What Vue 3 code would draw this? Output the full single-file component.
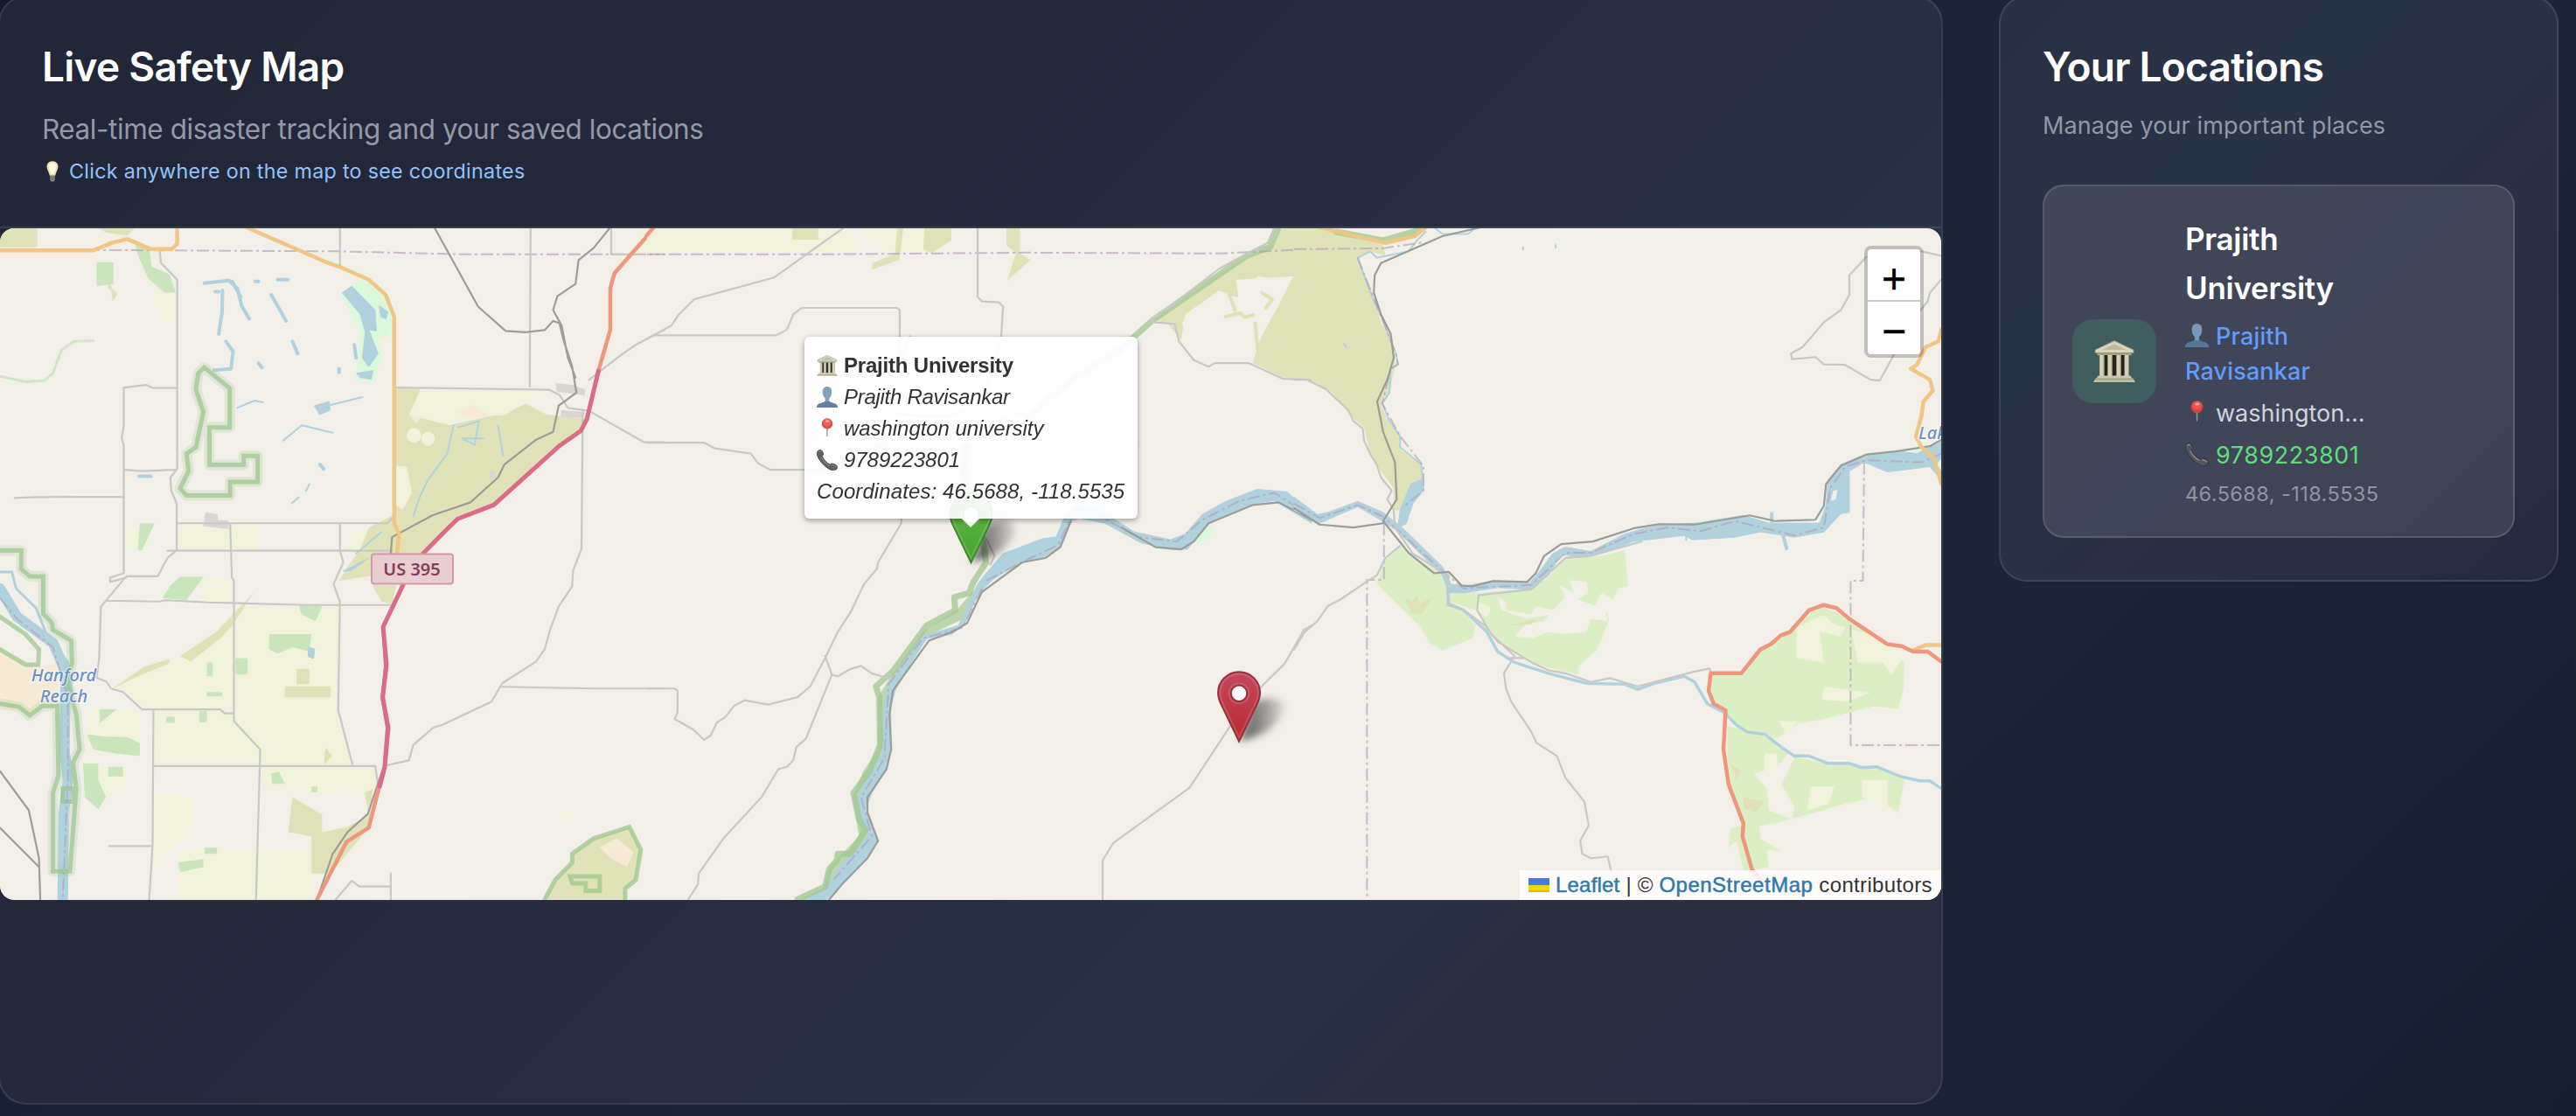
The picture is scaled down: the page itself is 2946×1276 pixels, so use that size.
<script setup>
import { h } from 'vue'

// Map geometry, split in three sheets; every sheet has its own local grid.
const sheets = [
  { x: 0, shapes: [
    ['olive', 'M0 0H88V46H0zM230 0H320L300 18 250 12zM258 120l6 20 14 12-12 18-4-24-8-8z'],
    ['farm', 'M360 140L415 150V216H378V178H360zM420 684H610V740H420zM300 684H330V740H300zM555 870H800L798 1110 832 1238H362V1108H550V1130L610 1195V1230H555zM265 1060L400 1000 500 940 550 905V1115L520 1108H335L300 1070zM362 1305H455L450 1400 400 1430 360 1490zM425 1430H610V1545H420V1440zM615 1240H885V1300H618zM610 1430H735V1545H610zM480 805H550V860H480zM1500 0H1568V62H1500zM1320 1340h28v28h-28zM205 1105L330 1110V1180L205 1190zM235 1240h60v60h-60zM845 690h60l-60 50h-40z'],
    ['green', 'M228 80H268V130L228 135zM318 40L352 50 358 90 400 108 415 150H388L350 118 328 70zM330 680H365L335 742H325zM425 803H480L440 857 383 852 405 820zM705 870H760L745 905 712 890zM635 935H735L730 975 690 965 655 980 635 970zM556 990H584V1028H556zM488 1000h14v32h-14zM488 1068h36v10h-36zM235 1108H275L235 1140zM205 1165L245 1170 300 1172 330 1185V1215L275 1210 220 1200zM196 1232H232V1270L250 1310 232 1338 200 1310zM255 1240h35v22h-35zM470 1112h18v26h-18zM640 1255l18-4 14 28h-30zM420 1460L480 1452V1470L425 1482zM482 1426h30v14h-30zM392 1125h20v14h-20zM735 1285h14v14h-14z'],
    ['olive', 'M262 1062L340 1010 400 992 400 1002 330 1030zM425 985L510 930 600 838 550 912 520 945 450 998zM934 370H990L1000 430 1060 455 1150 435 1190 430 1240 405 1290 430 1380 440 1370 465 1165 640 1080 670 1000 750H945L935 720 930 660zM870 690L930 660 945 750 880 800 800 812 820 780 850 740zM878 822H935L925 865 900 860zM690 1310L760 1350V1390L820 1378 870 1350 860 1300 880 1290 870 1380 780 1485H735V1400L680 1390zM672 1055H780V1080H672zM700 1015h30v35h-30zM768 1195l16 20-20 20z'],
    ['farm', 'M990 378H1290L1240 400 1190 432 1140 430 1050 452 1000 440 965 430zM960 478a17 17 0 1 0 34 0a17 17 0 1 0-34 0M994 486a16 16 0 1 0 32 0a16 16 0 1 0-32 0M935 548l25 2 12 60-22 40-15-10z'],
    ['wet', 'M805 155L850 120 895 135 925 185 922 245 890 260 902 295 880 355 840 350 850 240z'],
    ['sand', 'M1075 425L1115 408 1152 432 1110 440zM0 970L95 1010 135 1000V1105L100 1100 70 1120 0 1098zM965 432h28l-10 20z'],
    ['res', 'M1285 1545L1310 1500 1350 1460V1440L1400 1405 1485 1378 1512 1430 1500 1500 1475 1520V1545z'],
    ['sand', 'M1415 1425l40-20 40 30-15 35-40-20z'],
    ['town', 'M485 655l28 4 2 14h24v20l-60-6zM1310 358l40 4 30 10v14l-66-8zM1325 420l55 4-8 14-50-2zM1155 560l14 0v18h-14z'],
    ['water', 'M808 150L830 135 885 190 888 238 870 235 892 290 870 320 855 300 862 240 850 200zM842 335l38-6-4 20-26-4zM895 180l20 14-4 16-12-4zM742 410l35-10 2 20-24 10zM728 965l14 4-2 22-12-4zM810 790l60-30-40 28z'],
    ['creek', 'M482 128L540 122 560 140 570 180 588 210M548 124L568 160M525 145L524 195 516 245M533 262L550 285 545 325 505 328M640 155L675 215M655 120h25M602 124h8M690 262l12 28M836 270l4 30M800 325v8M610 312l8 10M755 545l8 10M328 572h28M508 148h8'],
    ['brook', 'M560 415L600 398 620 402M668 490L712 455 785 472M780 408L855 390M730 590l-8 16M705 620l-16 14M1070 455L1055 520 1010 580 990 620 975 665M1080 460l50-15-10 55-30-15 50 0M1175 455l12 70M900 700l-60 50'],
    ['creek2', 'M0 342L60 355 105 352 125 335 145 282 175 262 225 260'],
    ['river', 'M0 830L40 895 125 955 150 1010 155 1040 152 1200 160 1270 150 1350 148 1545'],
    ['river2', 'M0 792H28L38 830 85 875 110 935 160 1000 172 1080'],
    ['halo', 'M0 743H50V785L70 802H102V888L122 908 125 925 168 950 170 1000 160 1050 180 1120 188 1200 172 1230 180 1290 165 1480H125V1300L138 1260 135 1100 100 1100 70 1122 45 1102 0 1095M482 322L542 370V460H494V546H575V525H608V585H543V616H440L425 600 445 560 440 520 462 505 480 425 462 372 468 335z'],
    ['resline', 'M0 743H50V785L70 802H102V888L122 908 125 925 168 950 170 1000 160 1050 180 1120 188 1200 172 1230 180 1290 165 1480H125V1300L138 1260 135 1100 100 1100 70 1122 45 1102 0 1095M0 970L60 1005 90 1005 92 970 60 935 0 895M148 1290h26v30h-26zM482 322L542 370V460H494V546H575V525H608V585H543V616H440L425 600 445 560 440 520 462 505 480 425 462 372 468 335zM1285 1545L1310 1500 1350 1460V1440L1400 1405 1485 1378 1512 1430 1500 1500 1475 1520V1545M1345 1492H1415V1525H1382V1508H1350z'],
    ['bound', 'M0 52H230L800 55 1100 62H1568M0 852L40 900 125 965 160 1080V1270L148 1545'],
    ['road', 'M377 55L380 82 418 120V555L402 575 404 605 417 635V742L395 760 372 802H298L238 872 234 990 228 1035 252 1045 262 1060 290 1068 335 1108H520L530 1117H550M415 369H360L345 362 292 368V455L287 485 292 500V795L260 805V815L298 805M292 557L335 560 415 557M35 622L85 620 290 619M417 680H915L925 668M395 743H925M250 858L375 860 390 857 490 862 720 868H920M802 0V88M1252 0L1250 345V366M932 368L1295 373 1320 385 1340 415 1390 422 1520 494H1568M1375 425L1372 738 1352 790 1350 825 1318 872 1298 925 1285 970 1265 998 1185 1048 1160 1090 1045 1143 1022 1150 975 1190 965 1225 915 1236M1185 1056L1400 1060H1568M802 682V742L810 770 787 820 802 860 798 1110 832 1236M543 680L547 805 552 812 552 1135 614 1200 604 1545M362 1108L360 1420 352 1545M258 1422H355M362 1238H885L892 1280M1390 350L1470 290 1500 270 1568 235M1442 0V62H1500M792 1545L830 1502 848 1515H922M922 1485V1545'],
    ['rail', 'M1025 0L1128 182 1193 238 1240 241 1285 236 1305 215 1320 220 1330 260 1350 320 1360 380 1318 410 1305 470 1265 488 1190 545 1175 575 1110 632 1020 662 925 712 922 750M1440 0L1400 48 1365 75 1358 130 1315 158 1305 190 1325 225 1340 300 1358 345M948 825L902 920 908 1010 900 1080 912 1150 905 1240 868 1348 820 1390 785 1440 748 1545M0 1250L68 1340 92 1450 95 1545M0 1380L92 1470'],
    ['yellow', 'M0 53L220 53 265 35 300 27 355 50 405 50 418 38V0M582 0L765 78 800 90 870 120 910 155 930 205V680L942 705 937 750'],
    ['red', 'M1545 0L1450 105 1440 140V235L1412 330M895 1285L870 1380 818 1412 748 1545'],
    ['pink', 'M1412 330L1385 440 1370 468 1320 502 1165 638 1080 670 1040 708 998 750M952 820L904 918 912 1005 903 1080 916 1150 908 1240 896 1285'],
  ]},
  { x: 740, shapes: [
    ['farm', 'M0 0H470L500 56H0zM500 0H680L660 56H560z'],
    ['olive', 'M342 0H404V28H342zM590 0H605L595 75 530 97 532 82 585 60zM655 0H718V30L670 60 652 50zM848 0H880V60L905 75 850 122 870 60 848 40zM1500 0H1568V350L1500 345 1430 312 1450 200 1495 120 1440 112 1420 165 1380 158 1350 145 1270 200 1260 260 1230 222 1195 212 1400 75 1470 45z'],
    ['base', 'M1390 120L1525 112 1490 180 1450 250 1430 305 1300 300 1280 270 1262 220 1290 185 1360 168 1395 160zM1550 0h18v18z'],
    ['creek3', 'M1365 205l35-8 10 10 20-6M1435 220l6 60 10-20M1450 150l25 15-15 20M1372 150l15 40'],
    ['wet', 'M1290 715L1325 680 1342 692 1325 715 1300 730z'],
    ['resfill', 'M800 770L775 830 730 880 650 930 570 1040 545 1080V1200L510 1250 485 1310 500 1400 430 1470 415 1520 355 1545H420L500 1470 530 1400 500 1320 560 1230 565 1100 660 940 745 900z'],
    ['water', 'M800 795L840 750 935 715 965 712 985 665 1010 640 1060 645 1150 700 1235 718 1270 705 1310 660 1365 630 1440 602 1510 608 1568 660V680L1480 628 1430 635 1330 675 1275 740 1235 740 1165 725 1080 680 1020 668 1000 675 975 735 935 758 880 770 815 810 780 845 750 910 720 935 660 945 590 1050 575 1100 576 1200 560 1250 530 1300 515 1340 545 1410 520 1450 460 1510 425 1545H370L430 1510 455 1470 520 1400 490 1330 515 1270 555 1210 560 1100 570 1050 650 940 735 915 780 820z'],
    ['resline2', 'M1490 0L1470 45 1415 65 1195 212 1110 285 1010 345 940 400 900 440M755 500L745 560 790 700 800 770 770 815 760 840 725 850 727 880 660 915 580 1020 540 1055 548 1080 550 1190 525 1250 487 1300 500 1360 515 1385 480 1440 450 1440 448 1455 430 1475 420 1515 355 1545'],
    ['bound', 'M0 62L400 62 900 58 1350 60 1568 50M800 812L900 762 970 730 1000 668 1060 660 1160 712 1250 722 1310 672 1400 628 1480 610 1568 665M790 830L745 920 650 945 570 1050 560 1220 505 1310 530 1400 440 1500'],
    ['road', 'M18 248H305L330 235 345 200 365 185H590L596 190V300M0 256L58 225 75 200 112 165 300 115 465 0M780 0V160L790 170 830 172 840 182 835 260 790 400M0 495H135L160 508 245 520 262 542 290 557H372 420L600 480M600 670V680L545 770 542 785 512 820 480 885 450 930 420 990 385 1055 355 1080 285 1097 230 1087 205 1100 185 1125 165 1138 150 1168 135 1178 110 1155 65 1130 72 1115V1065L65 1060H0M420 985L436 1028 375 1175 352 1195 345 1225 330 1240 310 1245 270 1310 180 1405 122 1485 120 1510 97 1545M436 1028L450 1032 480 1015 505 1008 530 1025 575 1038M1075 1545V1455L1100 1415 1280 1288 1380 1140 1450 1055 1505 1002 1550 925 1568 915M1195 218L1245 222 1255 262 1290 305 1325 320 1340 312 1420 312 1500 348 1568 350M1480 0L1465 35 1415 60 1350 95 1290 140 1190 212M800 715L820 755 810 775M760 420L700 435 580 430M620 250L600 300 620 350M800 460L860 430 920 425'],
    ['rail', 'M1000 675L975 735 940 760 885 770 790 838 755 910 720 930 665 950 580 1065 572 1120 576 1200 565 1245 520 1310 520 1345 545 1410 520 1450 460 1510 430 1545M1120 690L1200 735 1260 740 1290 722 1325 680 1430 638 1490 632 1568 672'],
    ['red', 'M0 18L15 0'],
  ]},
  { x: 1480, shapes: [
    ['olive', 'M0 0H60L210 40 215 65 178 55 150 72 185 150 205 220 230 260 240 310 225 380 205 410 225 450 250 480 250 510 300 545 303 580 275 600 255 650H235L235 600 205 560 180 520 165 460 130 430 90 380 40 350 0 345z'],
    ['forest', 'M250 732L300 770 365 800 360 865 400 885 428 915 420 945 350 972 320 955 295 915 195 820 210 765zM365 830L440 840 550 830 600 805 640 755 730 755 780 742 788 825 765 830 740 880 742 905 715 970 670 1010V1028L570 1005 480 950 430 880 365 860zM985 1030H1055L1100 975 1170 930 1240 870 1300 895 1360 935 1400 960 1440 1000 1438 1060 1425 1108 1370 1100 1250 1130 1190 1140 1140 1175 1060 1155 1010 1105 985 1080zM1022 1145L1130 1175 1180 1215 1240 1230 1370 1240 1440 1270 1425 1345 1370 1310 1300 1325 1230 1345 1140 1368 1098 1375 1100 1405 1150 1435 1115 1430 1120 1470 1060 1480 1045 1410 1025 1425 1030 1380 1058 1375 1025 1280z'],
    ['base', 'M480 850L500 860 500 880 560 890 570 870 610 880 640 850 625 822 660 840 650 810 690 815 695 840 670 855 710 870 725 840 760 860 735 890 740 905 700 900 690 930 640 935 600 930 560 945 520 940 550 910 590 905 600 890 550 900 490 880zM1085 1255L1140 1240 1170 1205 1180 1220 1150 1280 1180 1330 1175 1360 1120 1340 1115 1290z'],
    ['farm', 'M1185 920L1250 890 1270 910 1300 920 1290 940 1240 930 1250 1000 1185 990zM1315 925L1400 945 1435 990 1410 1030 1390 1000 1330 1000zM1250 1055L1360 1070 1300 1090 1245 1085zM1110 1210h30v50h-30zM1220 1285h55l-15 40-50 15zM1340 1270H1400V1340L1340 1310zM435 860l30 15-10 20-20-10zM1145 1135h45l-30 30z'],
    ['sandy', 'M262 850L280 860 290 845 295 865 325 852 300 890 275 885zM1060 1310l50 10-20 25-30-10zM1030 1235l25 15-10 20zM510 915l60-15-10 12z'],
    ['wet', 'M1465 510h20v14h-20zM1170 680h50v6h-50zM635 735h22v8h-22z'],
    ['water', 'M0 620L55 660 80 655 150 630 210 655 255 690 350 780 370 820 400 825 470 812 555 818 580 790 610 750 640 735 700 745 780 705 850 685 950 680 1060 662 1120 680 1240 680 1255 640 1260 580 1290 545 1340 525 1430 515 1470 520 1527 490V530L1515 545 1527 560V580L1500 550 1400 562 1345 540 1310 560V655L1290 658 1250 700 1180 712 1100 700 1040 712 940 718 920 708 800 722 740 745 690 758 630 752 600 800 560 832 480 828 400 840 365 840 350 800 240 695 200 670 150 642 60 680 0 650zM245 690L250 650 275 590 300 580 305 605 280 635 265 680z'],
    ['base', 'M1272 605l10-2-4 22-12 4z'],
    ['brook', 'M150 70L180 150 210 215 240 290 245 315 228 325 225 380 208 405 225 445 250 480 250 505 300 545 305 600M150 70L180 55 195 70 270 55 290 30 310 10M925 700v18M950 680l5 12M330 0L350 15 410 15 430 0M118 268l6 8M540 45v6M617 40v6'],
    ['creek', 'M1127 658v18M1152 702l10 36'],
    ['creek4', 'M362 830L365 865 400 880 455 930 480 975 520 1000 600 1025 690 1048 780 1050 810 1062 850 1048 920 1032 945 1045 975 1095 1015 1115 1045 1145 1070 1160 1110 1165 1150 1195 1180 1215 1215 1215 1260 1232 1310 1232 1340 1242 1375 1240 1430 1262 1475 1272 1500 1272 1527 1290'],
    ['resline2', 'M100 10L210 30 300 5'],
    ['bound', 'M0 50L210 48 300 35M212 680V810H172V1545M1345 540L1342 812H1313V1190H1527M0 635L60 668 150 638 210 665 350 790 400 830 560 822 640 748 700 748 800 705 880 690 960 698 1040 675 1180 708 1250 690 1265 600 1300 550 1350 535 1480 540 1527 520M150 70L240 290 245 315 228 325 208 405 250 480 305 548 305 605 260 640'],
    ['road', 'M0 350L30 350 75 372 128 420 140 445 162 462 165 490 180 522 195 545 205 575 230 605 220 625 235 650 238 690 280 750 330 780 365 800 362 868 400 880 450 915 480 952 560 1000 600 1018 640 1025 700 1045 745 1036 810 1055 870 1040 940 1022 980 1014 983 1025M0 970L25 930 55 905 80 870 110 855 170 815 195 800 215 760 250 732M435 845L432 880 465 935 520 985 495 1025 500 1060 512 1090 560 1160 572 1185 620 1215 640 1265 685 1320 695 1375 675 1410 680 1440 700 1450 740 1446 748 1480M510 990H540M438 845L560 832 640 760 700 755 820 722M1350 68L1310 110V155L1290 190 1250 218 1200 275 1172 290 1175 303 1230 298 1250 315 1300 316 1360 350 1382 352 1425 275 1470 200 1495 170 1500 150 1527 120M1480 55L1527 65'],
    ['rail', 'M440 0L350 20 205 82 190 110 188 150 205 200 228 245 235 300 220 350 196 400 210 470 238 540 242 625 212 672 210 680 140 690 60 683 0 645M210 675L270 748 330 795 365 792 395 823 420 825 470 813 550 815 570 795 590 755 630 728 705 722 800 692 860 682 945 683 1075 662 1135 675 1230 672 1250 640 1255 590 1290 548 1350 522 1420 515 1500 503 1527 488'],
    ['yellow', 'M60 0L215 36 285 20 310 0M1527 235L1520 262 1490 275 1470 315 1455 325 1500 350 1507 375 1485 400 1480 435 1467 480 1480 505 1510 530 1527 590M1460 972L1490 960H1527'],
    ['red', 'M1100 1500L1080 1475 1058 1400 1060 1370 1025 1280 1013 1200 1018 1110 990 1095 978 1065 983 1025H1055L1100 970 1125 958 1148 938 1170 930 1215 880 1250 868 1280 875 1310 900 1400 958 1435 963 1460 975H1495L1527 998'],
  ]},
]

const glyphs = {
  temple: ['0 0 24 24', [
    ['path', { d: 'M12 .3 23 5.5v1.8H1V5.5z', fill: '#d8d4bb', stroke: '#8e8a72', 'stroke-width': .5 }],
    ['path', { d: 'M12 2.2 18.8 5.5H5.2z', fill: '#bdb89c' }],
    ['path', { d: 'M2.2 7.3h19.6v1.3H2.2z', fill: '#a5a188' }],
    ['path', { d: 'M4 8.5h16v12H4z', fill: '#24231e' }],
    ['path', { d: 'M3.6 8.5h2.6v12H3.6zM8.2 8.5h2.6v12H8.2zM13.200 8.500h2.600v12h-2.600zM17.800 8.500h2.600v12h-2.600z', fill: '#d5d1b7' }],
    ['path', { d: 'M5.8 8.5h.5v12h-.5zM10.4 8.5h.5v12h-.5zM15.400 8.500h.5v12h-.5zM20 8.500h.5v12H20z', fill: '#918d76' }],
    ['path', { d: 'M2.8 20.2h18.4l.9 1.5H1.9z', fill: '#cbc7ac' }],
    ['path', { d: 'M1.4 21.6h21.2L24 24H0z', fill: '#c5c0a2' }],
    ['path', { d: 'M1.2 22.4h21.6', stroke: '#8e8a72', 'stroke-width': .4 }],
  ]],
  person: ['0 0 24 24', [
    ['path', { d: 'M12 0C8.600 0 6.600 2.600 6.800 6.400c.1 2.800 1 5.300 2.900 6.900v3.100c-.5 1.600-4.300 2-6.700 3.100C1 20.400.2 22 0 24h24c-.2-2-1-3.600-3-4.500-2.400-1.100-6.200-1.500-6.700-3.100v-3.100c1.900-1.600 2.800-4.100 2.900-6.900C17.400 2.600 15.400 0 12 0z', fill: '#7799b9' }],
    ['path', { d: 'M0 24c.2-2 1-3.600 3-4.500 2.400-1.100 6.200-1.500 6.700-3.100 1.600 1 3 1 4.600 0 .5 1.600 4.300 2 6.700 3.100 2 .9 2.800 2.500 3 4.500z', fill: '#567798' }],
  ]],
  pin: ['0 0 24 24', [
    ['path', { d: 'M11.200 11h1.700l-.3 9.500-.6 1-.6-1z', fill: '#9a8f8d' }],
    ['circle', { cx: 12, cy: 6.4, r: 6.2, fill: '#d8403a' }],
    ['circle', { cx: 12, cy: 5.2, r: 4.4, fill: '#e55a50' }],
    ['ellipse', { cx: 12.3, cy: 3.6, rx: 2.1, ry: 1.4, fill: '#f7a59c' }],
  ]],
  phone: ['0 0 24 24', [
    ['path', { d: 'M1.300 1.800C2.600.4 4.400-.2 5.500 1c1.700 1.700 2.500 3.900 1.900 5L6.300 7.600c1.700 4 4.700 7.400 9 9.600l1.500-.9c1.400-.6 3.800.2 5.900 2 1.500 1.200 1.300 2.800-.2 4.200-2.300 2-6 1.500-9.700-1C7.400 18 2.900 12.500.9 7.300.1 5 .1 3.100 1.300 1.800z', fill: '#55565a', stroke: '#303134', 'stroke-width': .8 }],
    ['path', { d: 'M2.300 3.200C3 2 4.200 1.700 5 2.600M5.200 8.500c2 4.300 5 7.500 9.300 9.700M17.400 17.700c1.600-.2 3.300.7 4.600 2', fill: 'none', stroke: '#909296', 'stroke-width': 1 }],
  ]],
  bulb: ['0 0 24 24', [
    ['path', { d: 'M12 .3C8 .3 5.400 3.100 5.600 7c.1 3.200 2.500 5.600 3.200 9.800h6.400c.7-4.200 3.100-6.600 3.200-9.800C18.600 3.100 16 .3 12 .3z', fill: '#f8df9a' }],
    ['path', { d: 'M12 2C9.600 2 7.700 4.100 7.900 7.200c.1 2.600 1.700 4.400 2.200 7.800h3.800c.5-3.400 2.100-5.200 2.200-7.800C16.300 4.100 14.400 2 12 2z', fill: '#fffbe6' }],
    ['path', { d: 'M9.200 16.800h5.600v4.600L13.500 23.600h-3l-1.300-2.200z', fill: '#8b8b86' }],
    ['path', { d: 'M9.200 18.500h5.600M9.200 20.600h5.600', stroke: '#4c4d50', 'stroke-width': .6 }],
  ]],
}
const Glyph = (p) => h('svg', { viewBox: glyphs[p.name][0], 'aria-hidden': 'true' },
  glyphs[p.name][1].map(([tag, attrs]) => h(tag, attrs)))
Glyph.props = ['name']

const pins = [
  { id: 'green', x: 1110.5, y: 643.5, top: '#5cb946', bottom: '#4aa22f', edge: '#3c8a2a' },
  { id: 'red', x: 1417, y: 848, top: '#c2485c', bottom: '#bb2a2e', edge: '#96303f' },
]

const details = [
  { icon: 'person', text: 'Prajith Ravisankar' },
  { icon: 'pin', text: 'washington university' },
  { icon: 'phone', text: '9789223801' },
]
</script>

<template>
  <div class="page">
    <section class="panel map-panel">
      <header class="map-head">
        <h2 class="title t-map">Live Safety Map</h2>
        <p class="lead">Real-time disaster tracking and your saved locations</p>
        <p class="tip"><Glyph name="bulb" class="bulb" /><span>Click anywhere on the map to see coordinates</span></p>
      </header>

      <div class="map">
        <svg class="tiles" viewBox="0 261 2220 768" preserveAspectRatio="none">
          <g v-for="s in sheets" :key="s.x" :transform="`translate(${s.x} 260) scale(.4847 .4974)`">
            <path v-for="(p, i) in s.shapes" :key="i" :class="['m', p[0]]" :d="p[1]" />
          </g>
          <g class="water-name">
            <text x="73" y="779" text-anchor="middle">Hanford</text>
            <text x="73" y="803" text-anchor="middle">Reach</text>
            <text x="2194" y="501.500">Lake</text>
          </g>
          <rect x="425" y="633.500" width="93" height="34" rx="3" class="shield" />
          <text x="471" y="657.500" text-anchor="middle" class="shield-text">US 395</text>

          <defs>
            <linearGradient v-for="p in pins" :id="'fill-' + p.id" :key="p.id" x1="0" y1="0" x2="0" y2="1">
              <stop offset="0" :stop-color="p.top" />
              <stop offset="1" :stop-color="p.bottom" />
            </linearGradient>
            <linearGradient id="shade" x1="0" y1="0" x2="1" y2="0">
              <stop offset="0" stop-opacity=".6" />
              <stop offset=".4" stop-opacity=".45" />
              <stop offset="1" stop-opacity=".1" />
            </linearGradient>
            <filter id="soft" x="-50%" y="-50%" width="200%" height="200%"><feGaussianBlur stdDeviation="2.200" /></filter>
          </defs>
          <g v-for="p in pins" :key="p.id" :transform="`translate(${p.x - 25} ${p.y - 81}) scale(2)`">
            <path d="M13 40L20 19c6-4 14-4 17-1 3 4-2 12-8 16-5 3-10 5-16 6z" fill="url(#shade)" filter="url(#soft)" />
            <path d="M12.500.6C5.900.6.5 5.900.5 12.500c0 2.800.9 5 2 7.200l10 20.700 10-20.700c1.100-2.200 2-4.400 2-7.200C24.500 5.900 19.100.6 12.500.6z" :fill="`url(#fill-${p.id})`" :stroke="p.edge" />
            <path d="M12.500 1.700C6.500 1.700 1.600 6.500 1.600 12.500c0 2.600.9 4.700 1.900 6.700l9 18.800 9-18.800c1-2 1.900-4.100 1.900-6.700 0-6-4.900-10.800-10.900-10.800z" fill="none" stroke="#fff" stroke-opacity=".14" />
            <circle cx="12.500" cy="12.900" r="5.700" fill="none" stroke="#fff" stroke-opacity=".14" />
            <circle cx="12.500" cy="12.900" r="4.600" fill="#fff" :stroke="p.edge" />
          </g>
        </svg>

        <div class="tooltip">
          <div class="row name"><Glyph name="temple" class="em" />Prajith University</div>
          <div v-for="d in details" :key="d.icon" :class="['row', d.icon]"><Glyph :name="d.icon" class="em" />{{ d.text }}</div>
          <div class="row">Coordinates: 46.5688, -118.5535</div>
        </div>
        <div class="pin-dot"></div>

        <div class="zoom">
          <a class="zin">+</a>
          <a>−</a>
        </div>

        <div class="credit">
          <svg class="flag" viewBox="0 0 12 8"><path fill="#4c7be1" d="M0 0h12v4H0z" /><path fill="#ffd500" d="M0 4h12v3H0z" /><path fill="#e0bc00" d="M0 7h12v1H0z" /></svg>
          <span class="link">Leaflet</span><span class="bar">|</span><span>©</span><span class="link osm">OpenStreetMap</span><span class="contrib">contributors</span>
        </div>
      </div>
    </section>

    <aside class="panel side">
      <h2 class="title t-side">Your Locations</h2>
      <p class="side-lead">Manage your important places</p>
      <article class="card">
        <div class="badge"><Glyph name="temple" class="temple" /></div>
        <div class="info">
          <h3>Prajith<br>University</h3>
          <p class="owner"><Glyph name="person" class="ico" />Prajith<br>Ravisankar</p>
          <p class="place"><Glyph name="pin" class="ico" />washington...</p>
          <p class="tel"><Glyph name="phone" class="ico" />9789223801</p>
          <p class="coord">46.5688, -118.5535</p>
        </div>
      </article>
    </aside>
  </div>
</template>

<style>
body { background: #161d30; }
</style>

<style scoped>
.page {
  box-sizing: border-box;
  width: 2946px;
  height: 1276px;
  overflow: hidden;
  display: flex;
  align-items: flex-start;
  gap: 64px;
  background: linear-gradient(135deg, #14192d 0%, #1a2338 40%, #1e273a 66%, #1b2336 80%, #161d2f 100%);
  font-family: Inter, "Liberation Sans", sans-serif;
  color: #fff;
}
.page * { box-sizing: border-box; }
h2, h3, p { margin: 0; font-weight: 400; }
.panel {
  flex: none;
  border: 2px solid rgba(255, 255, 255, .1);
  border-radius: 32px;
  margin-top: -5px;
}
.map-panel {
  width: 2224px;
  height: 1268px;
  margin-left: -2px;
  background: linear-gradient(135deg, #212638 0%, #23293b 30%, #282d41 58%, #293245 72%, #2b2f42 82%, #292c40 100%);
}
.map-head {
  height: 264px;
  padding: 51px 48px 0;
  border-bottom: 2px solid rgba(255, 255, 255, .1);
}
.title { font-size: 46px; line-height: 56px; font-weight: 600; letter-spacing: -.75px; white-space: nowrap; }
.lead { font-size: 31.500px; line-height: 48px; margin-top: 20px; letter-spacing: -.44px; color: #9499a5; white-space: nowrap; }
.tip { display: flex; align-items: center; font-size: 23.300px; line-height: 32px; margin-top: 8px; letter-spacing: .28px; color: #93c1fb; white-space: nowrap; }
.bulb { width: 24px; height: 24px; margin-right: 7px; }

.map {
  position: relative;
  width: 2220px;
  height: 768px;
  border-radius: 16px;
  overflow: hidden;
  background: #f2efe9;
  font-family: "Liberation Sans", Arial, sans-serif;
}
.tiles { display: block; width: 2220px; height: 768px; }
.m { fill: none; vector-effect: non-scaling-stroke; stroke-linejoin: round; stroke-linecap: round; }
.base { fill: #f2efe9; }
.olive { fill: #dfe2b6; }
.farm { fill: #f1f2dc; }
.green { fill: #c9e5bb; }
.forest { fill: #dbeec4; }
.wet { fill: #dbf8db; }
.sand { fill: #f6ead4; }
.sandy { fill: #dfe2b4; }
.town { fill: #d8d5d2; }
.water { fill: #b0d2de; stroke: #b0d2de; stroke-width: 1; }
.res { fill: #dfe2b6; }
.resfill { fill: #bcd6ae; }
.creek { stroke: #b0d2de; stroke-width: 4; }
.brook { stroke: #b0d2de; stroke-width: 2; }
.creek2 { stroke: #cfe5c4; stroke-width: 3; stroke-dasharray: 12 3; }
.creek3 { stroke: #dfe2b6; stroke-width: 4; }
.creek4 { stroke: #b0d2de; stroke-width: 3.500; }
.river { stroke: #b0d2de; stroke-width: 12; }
.river2 { stroke: #b0d2de; stroke-width: 3; }
.halo { stroke: #98c48a; stroke-opacity: .2; stroke-width: 12; }
.resline { stroke: #98c48a; stroke-opacity: .7; stroke-width: 5; stroke-linejoin: miter; }
.resline2 { stroke: #a0c890; stroke-opacity: .75; stroke-width: 7; }
.bound { stroke: #b49ebd; stroke-opacity: .65; stroke-width: 2; stroke-dasharray: 14 4 3 4; stroke-linecap: butt; }
.road { stroke: #c8c8c7; stroke-width: 2.200; }
.rail { stroke: #9c9c98; stroke-width: 2.200; }
.yellow { stroke: #f1c684; stroke-width: 4.500; }
.red { stroke: #ef967c; stroke-width: 4.500; }
.pink { stroke: #dc6b87; stroke-width: 5; }
.water-name { font: italic 500 20px "Noto Sans", sans-serif; fill: #6b91c5; stroke: #fff; stroke-opacity: .6; stroke-width: 2.500; paint-order: stroke; }
.shield { fill: #e9cdd1; stroke: #d49aaa; stroke-width: 2; }
.shield-text { font: 600 20px "Noto Sans", sans-serif; fill: #853f58; }

.tooltip {
  position: absolute;
  left: 920px;
  top: 124px;
  width: 381px;
  height: 208px;
  padding: 15px 14px 13px;
  border-radius: 6px;
  background: #fff;
  box-shadow: 0 2px 6px rgba(0, 0, 0, .4);
  opacity: .92;
  font-size: 24px;
  color: #222;
}
.tooltip::after {
  content: "";
  position: absolute;
  left: 180px;
  top: 208px;
  border: 10px solid transparent;
  border-top-color: #fff;
  border-bottom: 0;
}
.row { height: 36px; line-height: 36px; font-style: italic; white-space: nowrap; display: flex; align-items: center; letter-spacing: .1px; }
.row.name { font-style: normal; font-weight: 700; letter-spacing: -.2px; }
.row.person { letter-spacing: -.28px; }
.row.pin, .row.phone { letter-spacing: -.05px; }
.em { width: 24px; height: 24px; margin-right: 7px; }
.pin-dot { position: absolute; left: 1102.500px; top: 320px; width: 16px; height: 16px; border-radius: 50%; background: #fff; }

.zoom {
  position: absolute;
  right: 20px;
  top: 20px;
  width: 68px;
  border: 4px solid rgba(0, 0, 0, .2);
  border-radius: 8px;
  background: #fff;
  background-clip: padding-box;
}
.zoom a { display: block; height: 60px; padding-top: 4px; line-height: 60px; text-align: center; color: #000; font-size: 48px; -webkit-text-stroke: .4px #000; }
.zoom .zin { border-bottom: 2px solid #ccc; }

.credit {
  position: absolute;
  right: 0;
  bottom: 0;
  width: 482px;
  height: 34px;
  padding-left: 10px;
  display: flex;
  align-items: center;
  background: rgba(255, 255, 255, .8);
  font-size: 24px;
  color: #333;
  white-space: nowrap;
}
.flag { width: 24px; height: 16px; margin-right: 7px; }
.link { color: #3079a9; letter-spacing: .2px; -webkit-text-stroke: .5px #3079a9; }
.bar { margin: 0 7px; }
.link.osm { margin: 0 7px; letter-spacing: .5px; }
.contrib { letter-spacing: .35px; }

.side { width: 640px; height: 670px; padding: 51px 48px 0; background: linear-gradient(135deg, #293044 0%, #293346 35%, #2b2f43 65%, #282b3f 100%); }
.side-lead { font-size: 27px; line-height: 40px; margin-top: 20px; letter-spacing: .12px; color: #9298a4; white-space: nowrap; }
.card {
  display: flex;
  align-items: center;
  gap: 33px;
  width: 540px;
  height: 404px;
  margin-top: 47px;
  padding: 0 32px;
  border: 2px solid rgba(255, 255, 255, .12);
  border-radius: 24px;
  background: linear-gradient(135deg, #414756 0%, #404659 50%, #3f4555 75%, #3e4254 100%);
}
.badge { flex: none; width: 96px; height: 96px; border-radius: 24px; background: #405d60; display: flex; align-items: center; justify-content: center; }
.temple { width: 48px; height: 48px; }
.info { white-space: nowrap; }
h3 { font-size: 35px; line-height: 56px; font-weight: 600; letter-spacing: -.3px; }
.info p { margin-top: 8px; font-size: 27px; line-height: 40px; }
.ico { width: 27px; height: 27px; margin-right: 8px; vertical-align: -3px; }
.info .owner { color: #629bfa; font-weight: 500; letter-spacing: .15px; }
.place { color: #d0d4db; }
.info .tel { color: #5fdc7c; letter-spacing: .55px; }
.info .coord { font-size: 23.500px; line-height: 32px; letter-spacing: .42px; color: #8f95a3; }
</style>
